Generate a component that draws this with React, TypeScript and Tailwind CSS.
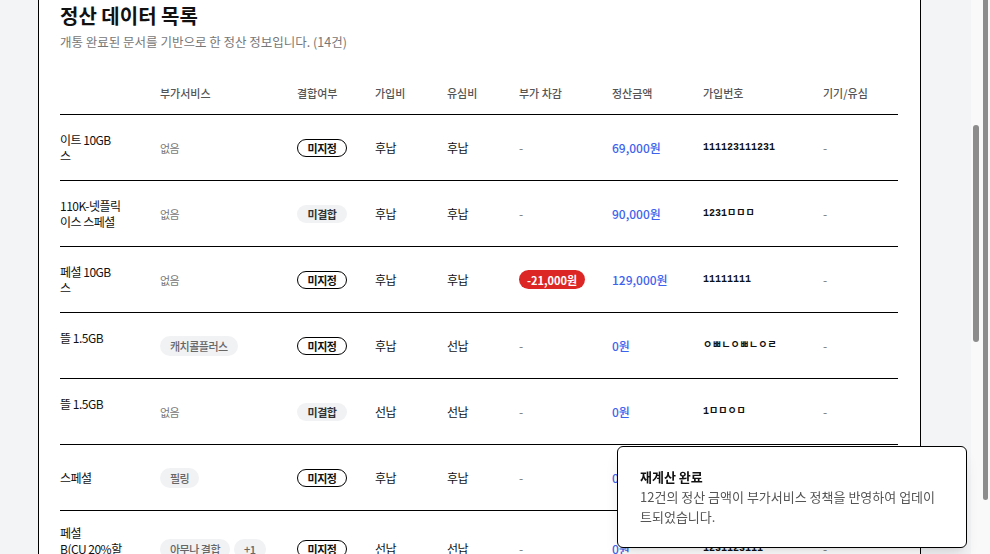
import React from 'react';

type Row = {
  name: string[];
  addons: string[];
  bind: '미지정' | '미결합';
  joinFee: string;
  usimFee: string;
  deduct?: string;
  amount: string;
  number: string;
};

const HEADERS = ['', '부가서비스', '결합여부', '가입비', '유심비', '부가 차감', '정산금액', '가입번호', '기기/유심'];

const ROWS: Row[] = [
  { name: ['이트 10GB', '스'], addons: [], bind: '미지정', joinFee: '후납', usimFee: '후납', amount: '69,000원', number: '111123111231' },
  { name: ['110K-넷플릭', '이스 스페셜'], addons: [], bind: '미결합', joinFee: '후납', usimFee: '후납', amount: '90,000원', number: '1231ㅁㅁㅁ' },
  { name: ['페셜 10GB', '스'], addons: [], bind: '미지정', joinFee: '후납', usimFee: '후납', deduct: '-21,000원', amount: '129,000원', number: '11111111' },
  { name: ['뜰 1.5GB', '\u00a0'], addons: ['캐치콜플러스'], bind: '미지정', joinFee: '후납', usimFee: '선납', amount: '0원', number: 'ㅇㅃㄴㅇㅃㄴㅇㄹ' },
  { name: ['뜰 1.5GB', '\u00a0'], addons: [], bind: '미결합', joinFee: '선납', usimFee: '선납', amount: '0원', number: '1ㅁㅁㅇㅁ' },
  { name: ['스페셜'], addons: ['필링'], bind: '미지정', joinFee: '후납', usimFee: '후납', amount: '0원', number: '1231123111' },
  { name: ['페셜', 'B(CU 20%할', '인)'], addons: ['아무나 결합', '+1'], bind: '미지정', joinFee: '선납', usimFee: '선납', amount: '0원', number: '1231123111' },
];

const COLS = 'grid grid-cols-[100px_137px_78px_72px_72px_93px_91px_120px_75px]';

function BindBadge({ value }: { value: Row['bind'] }) {
  if (value === '미지정') {
    return (
      <span className="inline-flex h-[18px] w-[50px] items-center justify-center rounded-full border border-black text-[11px] font-bold leading-4 text-[#111]">
        미지정
      </span>
    );
  }
  return (
    <span className="inline-flex h-[18px] w-[50px] items-center justify-center rounded-full bg-[#f1f2f4] text-[11px] font-bold leading-4 text-[#333]">
      미결합
    </span>
  );
}

export default function App() {
  return (
    <div className="flex h-[554px] w-[990px] overflow-hidden bg-[#f3f4f6] font-['Noto_Sans_CJK_KR','Noto_Sans',sans-serif]">
      {/* 본문 영역 */}
      <div className="h-full w-[971px] shrink-0 overflow-hidden">
        <div className="ml-[38px] h-full w-[883px] border-x border-black bg-white pl-[21px] pr-[22px] pt-[2px]">
          <h1 className="text-[20px] font-bold leading-7 text-[#111]">정산 데이터 목록</h1>
          <p className="mt-1 text-[12.5px] leading-4 text-[#777]">개통 완료된 문서를 기반으로 한 정산 정보입니다. (14건)</p>

          <div className="mt-[22px] overflow-hidden">
            {/* 헤더 */}
            <div className={`${COLS} border-b border-black py-[13px] text-[11px] font-medium leading-4 text-[#555]`}>
              {HEADERS.map((h, i) => (
                <div key={i}>{h}</div>
              ))}
            </div>

            {/* 행 */}
            {ROWS.map((r, i) => (
              <div
                key={i}
                className={`${COLS} min-h-[66px] items-center border-b border-black py-[14px] text-[12px] leading-4 tracking-[-0.5px] text-[#111]`}
              >
                <div className="whitespace-nowrap">
                  {r.name.map((line, j) => (
                    <div key={j}>{line}</div>
                  ))}
                </div>
                <div className="flex items-center gap-1">
                  {r.addons.length === 0 ? (
                    <span className="text-[11px] text-[#777]">없음</span>
                  ) : (
                    r.addons.map((a) => (
                      <span
                        key={a}
                        className="inline-flex h-5 items-center rounded-full bg-[#f1f2f4] px-[10px] text-[11px] font-medium text-[#666]"
                      >
                        {a}
                      </span>
                    ))
                  )}
                </div>
                <div>
                  <BindBadge value={r.bind} />
                </div>
                <div>{r.joinFee}</div>
                <div>{r.usimFee}</div>
                <div>
                  {r.deduct ? (
                    <span className="inline-flex h-[19px] items-center rounded-full bg-[#dc2626] px-2 text-[11px] font-bold tracking-normal text-white">
                      {r.deduct}
                    </span>
                  ) : (
                    <span className="text-[#777]">-</span>
                  )}
                </div>
                <div className="font-medium tracking-normal text-[#3d63ee]">{r.amount}</div>
                <div className="font-['Liberation_Mono','Noto_Sans_CJK_KR',monospace] text-[10px] font-bold tracking-normal text-[#111]">
                  {r.number}
                </div>
                <div className="text-[#777]">-</div>
              </div>
            ))}
          </div>
        </div>
      </div>

      {/* 스크롤바 */}
      <div className="h-full w-[10px] shrink-0 bg-[#f9f9f9] pl-[2px] pt-[125px]">
        <div className="h-[217px] w-[6px] rounded-full bg-[#8c8c8c]" />
      </div>
      <div className="h-full w-[9px] shrink-0 bg-[#f9f9f9] pl-[2px]">
        <div className="h-[500px] w-[5px] rounded-b-full bg-[#8c8c8c]" />
      </div>

      {/* 토스트 */}
      <div className="fixed bottom-[6px] left-[617px] w-[350px] rounded-md border border-black bg-white py-5 pl-[22px] pr-[28px] shadow-lg">
        <div className="text-[13px] font-bold leading-5 text-[#111]">재계산 완료</div>
        <div className="text-[13px] leading-5 text-[#555]">
          12건의 정산 금액이 부가서비스 정책을 반영하여 업데이트되었습니다.
        </div>
      </div>
    </div>
  );
}
